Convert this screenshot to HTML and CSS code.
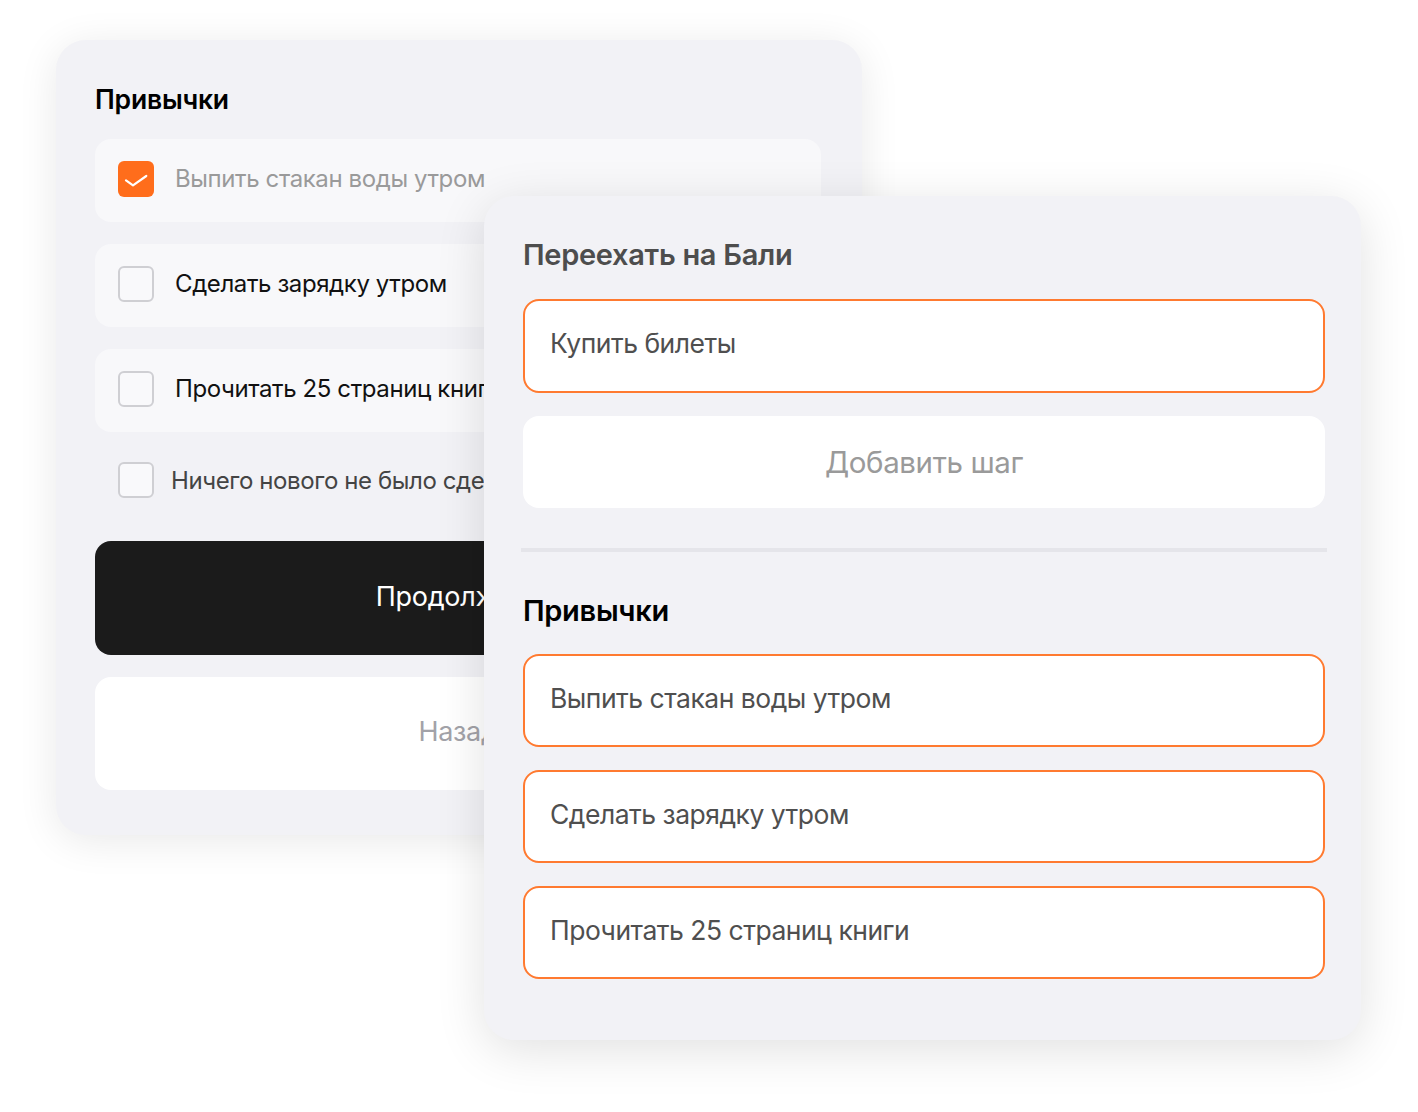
FILE: index.html
```html
<!DOCTYPE html>
<html lang="ru">
<head>
<meta charset="utf-8">
<title>Привычки</title>
<link rel="stylesheet" href="styles.css">
</head>
<body>
<div class="stage">
  <section class="card card-back">
    <h2 class="title title-back">Привычки</h2>
    <div class="list">
      <div class="row row-filled">
        <span class="box box-checked">
          <svg viewBox="0 0 36 36" width="36" height="36"><path d="M8 19.3 L15 24.3 L28.3 15" fill="none" stroke="#fff" stroke-width="2.2" stroke-linecap="round" stroke-linejoin="round"/></svg>
        </span>
        <span class="label label-done">Выпить стакан воды утром</span>
      </div>
      <div class="row row-filled">
        <span class="box"></span>
        <span class="label">Сделать зарядку утром</span>
      </div>
      <div class="row row-filled">
        <span class="box"></span>
        <span class="label">Прочитать 25 страниц книги</span>
      </div>
      <div class="row row-plain">
        <span class="box"></span>
        <span class="label label-muted">Ничего нового не было сделано</span>
      </div>
    </div>
    <div class="btn btn-dark">Продолжить</div>
    <div class="btn btn-light">Назад</div>
  </section>

  <section class="card card-front">
    <h2 class="title title-gray">Переехать на Бали</h2>
    <div class="field">Купить билеты</div>
    <div class="add">Добавить шаг</div>
    <hr class="divider">
    <h2 class="title title-second">Привычки</h2>
    <div class="fields">
      <div class="field">Выпить стакан воды утром</div>
      <div class="field">Сделать зарядку утром</div>
      <div class="field">Прочитать 25 страниц книги</div>
    </div>
  </section>
</div>
</body>
</html>
```
FILE: styles.css
```css
* { box-sizing: border-box; }
html, body {
  margin: 0;
  padding: 0;
  background: #ffffff;
  font-family: Inter, "Noto Sans", "Liberation Sans", sans-serif;
}
.stage {
  position: relative;
  width: 1418px;
  height: 1112px;
  padding: 40px 0 0 56px;
}
.card {
  background: #f2f2f6;
  border-radius: 30px;
}
.card-back {
  width: 806px;
  height: 795px;
  padding: 37px 41px 0 39px;
  box-shadow: 0 6px 40px rgba(0, 0, 0, 0.09);
  overflow: hidden;
}
.title {
  margin: 0;
  font-size: 29px;
  font-weight: 600;
  line-height: 44px;
  color: #000;
  letter-spacing: -0.3px;
}
.title-back {
  font-size: 26.5px;
  letter-spacing: -0.2px;
}
.list {
  margin-top: 18px;
  display: flex;
  flex-direction: column;
  gap: 22px;
}
.row {
  display: flex;
  align-items: center;
  gap: 21px;
  padding-left: 23px;
  border-radius: 16px;
  white-space: nowrap;
}
.row-filled {
  height: 83px;
  padding-bottom: 4px;
  background: #f8f8fa;
}
.row-plain {
  height: 52px;
  gap: 17px;
}
.box {
  flex: none;
  width: 36px;
  height: 36px;
  border-radius: 6px;
  border: 2px solid #cfcfd3;
  background: #f9f9fb;
}
.box-checked {
  border: none;
  background: #ff6d1b;
}
.box svg { display: block; }
.label {
  font-size: 24px;
  color: #111;
  letter-spacing: -0.4px;
}
.label-done { color: #9a9a9a; }
.label-muted { color: #444444; }
.btn {
  height: 114px;
  border-radius: 16px;
  display: flex;
  align-items: center;
  justify-content: center;
  font-size: 27px;
  letter-spacing: -0.3px;
  padding-bottom: 4px;
}
.btn-dark {
  margin-top: 35px;
  background: #1b1b1b;
  color: #fff;
}
.btn-light {
  margin-top: 22px;
  height: 113px;
  background: #fff;
  color: #a2a2a8;
}
.card-front {
  position: absolute;
  left: 484px;
  top: 196px;
  width: 877px;
  height: 844px;
  padding: 37px 34px 0 37px;
  box-shadow: 0 10px 50px rgba(0, 0, 0, 0.12);
}
.card-front > .title { padding-left: 2px; }
.title-gray { color: #4d4d4d; }
.field {
  margin: 0 2px;
  height: 94px;
  border: 2px solid #ff7a30;
  border-radius: 16px;
  background: #fff;
  display: flex;
  align-items: center;
  padding: 0 0 6px 25px;
  font-size: 26.5px;
  color: #4f4f4f;
  letter-spacing: -0.5px;
}
.card-front > .field { margin-top: 22px; }
.add {
  margin: 23px 2px 0;
  height: 92px;
  border-radius: 16px;
  background: #fff;
  display: flex;
  align-items: center;
  justify-content: center;
  font-size: 29.5px;
  color: #9a9a9a;
  letter-spacing: -0.4px;
}
.divider {
  margin: 40px 0 0;
  border: none;
  height: 4px;
  background: #e5e5ea;
}
.title-second {
  margin-top: 37px;
}
.fields {
  margin-top: 21px;
  display: flex;
  flex-direction: column;
  gap: 23px;
}
.fields .field { height: 93px; }
```
